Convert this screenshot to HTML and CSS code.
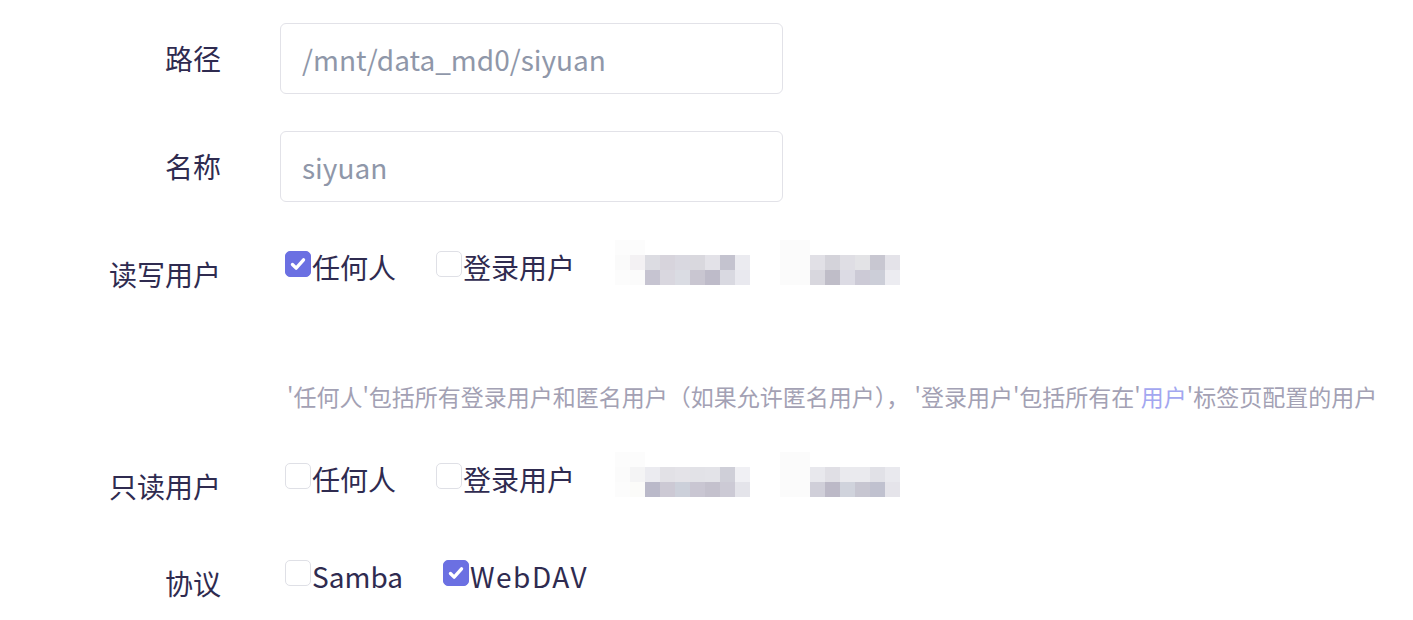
FILE: index.html
```html
<!DOCTYPE html>
<html lang="zh-CN">
<head>
  <meta charset="UTF-8" />
  <title>共享设置</title>
  <link rel="stylesheet" href="styles.css">
</head>
<body>
  <form class="share-form">
    <div class="form-row">
      <label class="form-label">路径</label>
      <div class="form-field">
        <input class="text-input" type="text" placeholder="/mnt/data_md0/siyuan" />
      </div>
    </div>

    <div class="form-row">
      <label class="form-label">名称</label>
      <div class="form-field">
        <input class="text-input" type="text" placeholder="siyuan" />
      </div>
    </div>

    <div class="form-row row-users">
      <label class="form-label">读写用户</label>
      <div class="form-field">
        <div class="check-group">
          <label class="check"><span class="box is-checked"><svg viewBox="0 0 26 26"><path d="M7 13.5l4 4 8-9" /></svg></span>任何人</label>
          <label class="check"><span class="box"></span>登录用户</label>
          <span class="blurred">
            <svg width="135" height="45" viewBox="0 0 135 45">
              <rect x="0" y="0" width="30" height="15" fill="#fcfcfc"/>
              <rect x="0" y="15" width="15" height="15" fill="#fafafa"/>
              <rect x="15" y="15" width="15" height="15" fill="#f3f1f3"/>
              <rect x="30" y="15" width="15" height="15" fill="#dcdce2"/>
              <rect x="45" y="15" width="15" height="15" fill="#d7d4dc"/>
              <rect x="60" y="15" width="15" height="15" fill="#d9d8e0"/>
              <rect x="75" y="15" width="15" height="15" fill="#d9d8de"/>
              <rect x="90" y="15" width="15" height="15" fill="#e3e2e8"/>
              <rect x="105" y="15" width="15" height="15" fill="#c4c3cf"/>
              <rect x="120" y="15" width="15" height="15" fill="#ebebf0"/>
              <rect x="0" y="30" width="15" height="15" fill="#fcfcfc"/>
              <rect x="15" y="30" width="15" height="15" fill="#fbfbfb"/>
              <rect x="30" y="30" width="15" height="15" fill="#c6c4d1"/>
              <rect x="45" y="30" width="15" height="15" fill="#d9d7df"/>
              <rect x="60" y="30" width="15" height="15" fill="#dadce3"/>
              <rect x="75" y="30" width="15" height="15" fill="#c9c6d1"/>
              <rect x="90" y="30" width="15" height="15" fill="#bebbc9"/>
              <rect x="105" y="30" width="15" height="15" fill="#d9d9e1"/>
              <rect x="120" y="30" width="15" height="15" fill="#e9e9ef"/>
            </svg>
          </span>
          <span class="blurred">
            <svg width="120" height="45" viewBox="0 0 120 45">
              <rect x="0" y="0" width="30" height="45" fill="#fbfbfb"/>
              <rect x="30" y="15" width="15" height="15" fill="#e1e0e6"/>
              <rect x="45" y="15" width="15" height="15" fill="#d4d3da"/>
              <rect x="60" y="15" width="15" height="15" fill="#dfdee4"/>
              <rect x="75" y="15" width="15" height="15" fill="#e3e3e6"/>
              <rect x="90" y="15" width="15" height="15" fill="#c8c7d1"/>
              <rect x="105" y="15" width="15" height="15" fill="#e4e3e9"/>
              <rect x="30" y="30" width="15" height="15" fill="#d8d7de"/>
              <rect x="45" y="30" width="15" height="15" fill="#bfbdc8"/>
              <rect x="60" y="30" width="15" height="15" fill="#dcdbe4"/>
              <rect x="75" y="30" width="15" height="15" fill="#cccad6"/>
              <rect x="90" y="30" width="15" height="15" fill="#ccced8"/>
              <rect x="105" y="30" width="15" height="15" fill="#ececf1"/>
            </svg>
          </span>
        </div>
      </div>
    </div>

    <p class="form-hint">'任何人'包括所有登录用户和匿名用户（如果允许匿名用户）， '登录用户'包括所有在'<a href="#" class="hint-link">用户</a>'标签页配置的用户</p>

    <div class="form-row row-users row-readonly">
      <label class="form-label">只读用户</label>
      <div class="form-field">
        <div class="check-group">
          <label class="check"><span class="box"></span>任何人</label>
          <label class="check"><span class="box"></span>登录用户</label>
          <span class="blurred">
            <svg width="135" height="45" viewBox="0 0 135 45">
              <rect x="0" y="0" width="30" height="15" fill="#fcfcfc"/>
              <rect x="0" y="15" width="15" height="15" fill="#fbfbfb"/>
              <rect x="15" y="15" width="15" height="15" fill="#f4f4f5"/>
              <rect x="30" y="15" width="15" height="15" fill="#ebebf0"/>
              <rect x="45" y="15" width="15" height="15" fill="#e2e1e6"/>
              <rect x="60" y="15" width="15" height="15" fill="#e4e3e8"/>
              <rect x="75" y="15" width="15" height="15" fill="#e2e2e7"/>
              <rect x="90" y="15" width="15" height="15" fill="#e3e3e8"/>
              <rect x="105" y="15" width="15" height="15" fill="#cfcfd8"/>
              <rect x="120" y="15" width="15" height="15" fill="#f0f0f4"/>
              <rect x="0" y="30" width="15" height="15" fill="#fcfcfc"/>
              <rect x="15" y="30" width="15" height="15" fill="#fbfbf9"/>
              <rect x="30" y="30" width="15" height="15" fill="#bab9c9"/>
              <rect x="45" y="30" width="15" height="15" fill="#ccc9d4"/>
              <rect x="60" y="30" width="15" height="15" fill="#ccd0da"/>
              <rect x="75" y="30" width="15" height="15" fill="#c9c6d2"/>
              <rect x="90" y="30" width="15" height="15" fill="#c4c1cd"/>
              <rect x="105" y="30" width="15" height="15" fill="#cccad5"/>
              <rect x="120" y="30" width="15" height="15" fill="#e4e4ea"/>
            </svg>
          </span>
          <span class="blurred">
            <svg width="120" height="45" viewBox="0 0 120 45">
              <rect x="0" y="0" width="30" height="45" fill="#fbfbfb"/>
              <rect x="30" y="15" width="15" height="15" fill="#e8e8ed"/>
              <rect x="45" y="15" width="15" height="15" fill="#e0dfe5"/>
              <rect x="60" y="15" width="15" height="15" fill="#eaeaee"/>
              <rect x="75" y="15" width="15" height="15" fill="#eaeaee"/>
              <rect x="90" y="15" width="15" height="15" fill="#e1e1e7"/>
              <rect x="105" y="15" width="15" height="15" fill="#e9e9ee"/>
              <rect x="30" y="30" width="15" height="15" fill="#d0cfd9"/>
              <rect x="45" y="30" width="15" height="15" fill="#bcb9c7"/>
              <rect x="60" y="30" width="15" height="15" fill="#d0d3dc"/>
              <rect x="75" y="30" width="15" height="15" fill="#c7c6d1"/>
              <rect x="90" y="30" width="15" height="15" fill="#c0c1cf"/>
              <rect x="105" y="30" width="15" height="15" fill="#e5e4ea"/>
            </svg>
          </span>
        </div>
      </div>
    </div>

    <div class="form-row row-last">
      <label class="form-label">协议</label>
      <div class="form-field">
        <div class="check-group">
          <label class="check"><span class="box"></span>Samba</label>
          <label class="check"><span class="box is-checked"><svg viewBox="0 0 26 26"><path d="M7 13.5l4 4 8-9" /></svg></span><span class="wide">WebDAV</span></label>
        </div>
      </div>
    </div>
  </form>
</body>
</html>
```

FILE: styles.css
```css
html, body {
  margin: 0;
  padding: 0;
  background: #fff;
}

body {
  font-family: "Noto Sans CJK SC", sans-serif;
  color: #2f2b50;
  overflow: hidden;
}

.share-form {
  padding-top: 23px;
}

.form-row {
  display: flex;
  align-items: flex-start;
  margin-bottom: 37px;
}

.form-label {
  width: 221px;
  flex: none;
  text-align: right;
  font-size: 28px;
  line-height: 71px;
  margin-right: 59px;
}

.form-field {
  flex: none;
}

.text-input {
  width: 503px;
  height: 71px;
  box-sizing: border-box;
  border: 1px solid #e2e2e8;
  border-radius: 6px;
  padding: 0 21px;
  font-family: inherit;
  font-size: 28px;
  color: #2f2b50;
  outline: none;
}

.text-input::placeholder {
  color: #8f97a9;
}

/* checkboxes */
.check-group {
  display: flex;
  align-items: flex-start;
  padding: 12px 0 0 5px;
  gap: 40px;
}

.check {
  display: flex;
  align-items: flex-start;
  font-size: 28px;
  line-height: 32px;
}

.box {
  width: 26px;
  height: 26px;
  box-sizing: border-box;
  border: 1px solid #dfe0e6;
  border-radius: 5px;
  margin-right: 1px;
  flex: none;
}

.box.is-checked {
  background: #6b70e2;
  border-color: #6b70e2;
}

.box svg {
  display: block;
  width: 24px;
  height: 24px;
  fill: none;
  stroke: #fff;
  stroke-width: 3.6;
  stroke-linecap: round;
  stroke-linejoin: round;
}

.wide {
  letter-spacing: 1.5px;
}

.blurred {
  display: block;
  margin-top: -11px;
}

.blurred svg {
  display: block;
}

.blurred + .blurred {
  margin-left: -10px;
}

.row-users {
  margin-bottom: 71px;
}

.row-readonly {
  margin-bottom: 26px;
}

.row-last {
  margin-bottom: 0;
}

.form-hint {
  margin: 0 0 40px 287px;
  font-size: 23px;
  line-height: 30px;
  color: #a3a1b4;
}

.hint-link {
  color: #a3a7f0;
  text-decoration: none;
}
```
